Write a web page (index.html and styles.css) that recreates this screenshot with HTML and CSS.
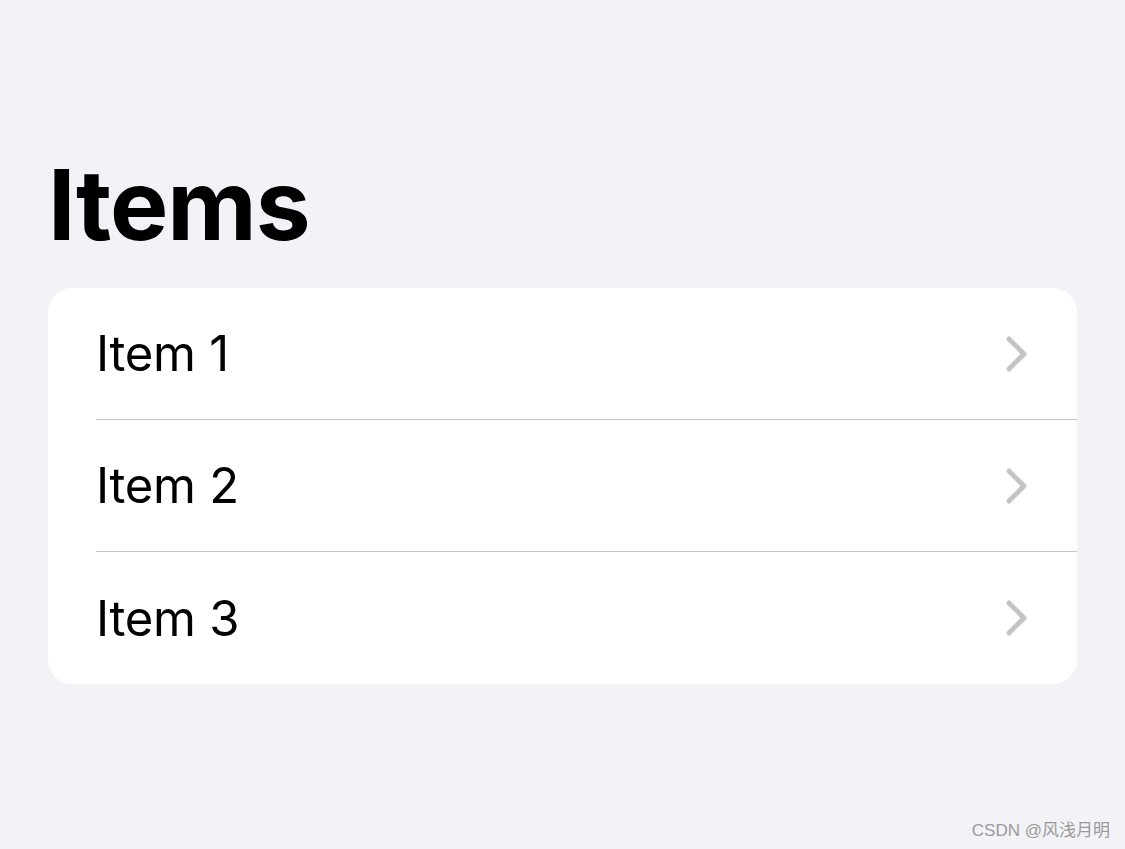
FILE: index.html
```html
<!DOCTYPE html>
<html>
<head>
<meta charset="utf-8">
<link rel="stylesheet" href="styles.css">
</head>
<body>
<div class="page">
  <h1 class="title">Items</h1>
  <div class="card">
    <div class="row">
      <span class="label">Item 1</span>
      <svg class="chev" width="24" height="36" viewBox="0 0 24 36"><path d="M4 3 L19 18 L4 33" fill="none" stroke="#c4c4c6" stroke-width="5" stroke-linecap="round" stroke-linejoin="round"/></svg>
    </div>
    <div class="row">
      <span class="label">Item 2</span>
      <svg class="chev" width="24" height="36" viewBox="0 0 24 36"><path d="M4 3 L19 18 L4 33" fill="none" stroke="#c4c4c6" stroke-width="5" stroke-linecap="round" stroke-linejoin="round"/></svg>
    </div>
    <div class="row">
      <span class="label">Item 3</span>
      <svg class="chev" width="24" height="36" viewBox="0 0 24 36"><path d="M4 3 L19 18 L4 33" fill="none" stroke="#c4c4c6" stroke-width="5" stroke-linecap="round" stroke-linejoin="round"/></svg>
    </div>
  </div>
  <div class="watermark">CSDN @风浅月明</div>
</div>
</body>
</html>
```

FILE: styles.css
```css
html, body {
  margin: 0;
  padding: 0;
  background: #f2f2f7;
}
body {
  font-family: Inter, "Noto Sans", "Noto Sans CJK SC", sans-serif;
  color: #000;
}
.page {
  width: 1125px;
  height: 849px;
  box-sizing: border-box;
  padding: 145px 48px 0 48px;
  display: flex;
  flex-direction: column;
  position: relative;
}
.title {
  margin: 0;
  font-size: 98px;
  font-weight: 700;
  letter-spacing: -1px;
  line-height: 120px;
  height: 143px;
}
.card {
  background: #fff;
  border-radius: 24px;
  overflow: hidden;
  width: 1029px;
}
.row {
  height: 131px;
  margin-left: 48px;
  padding-right: 48px;
  display: flex;
  align-items: center;
  justify-content: space-between;
}
.row + .row {
  border-top: 1px solid #c6c6c8;
}
.row:last-child {
  height: 132px;
}
.label {
  font-size: 49px;
  font-weight: 400;
  letter-spacing: -0.3px;
}
.chev {
  display: block;
}
.watermark {
  position: absolute;
  right: 15px;
  bottom: 8px;
  font-family: "Liberation Sans", "Noto Sans CJK SC", sans-serif;
  font-size: 17px;
  color: #9a9a9a;
}
```
